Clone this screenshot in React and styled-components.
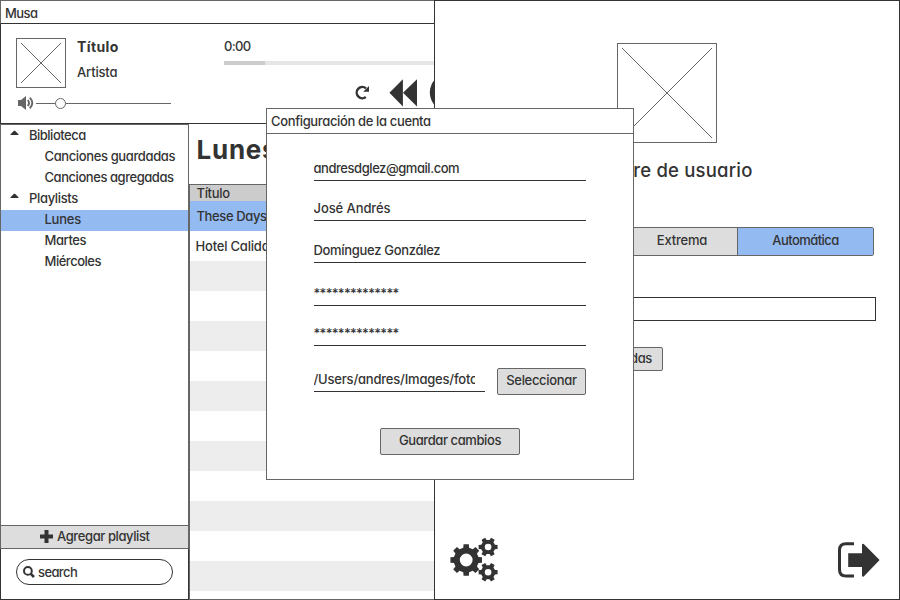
import React from 'react';
import styled, { createGlobalStyle } from 'styled-components';

const INK = '#333';
const LINE = '#666';
const BLUE = '#94baf2';
const GREY = '#ddd';

const GlobalStyle = createGlobalStyle`
  *, *::before, *::after { box-sizing: border-box; }
  body {
    margin: 0;
    background: #fff;
    color: ${INK};
    font: 500 13px Inter, "Liberation Sans", sans-serif;
    font-feature-settings: "cv11";
    overflow: hidden;
  }
  h1, h2, p, ul { margin: 0; padding: 0; list-style: none; }
  svg { display: block; flex: none; overflow: visible; }
`;

const Screen = styled.div`
  position: relative;
  display: flex;
  width: 900px;
  height: 600px;
  overflow: hidden;
`;

const Text = styled.span`
  display: block;
  white-space: pre;
  letter-spacing: ${(p) => p.$track || 0}px;
`;

/* Player window */
const MainWindow = styled.section`
  display: flex;
  flex-direction: column;
  width: 434px;
  height: 600px;
  overflow: hidden;
  border-top: 1px solid ${LINE};
`;

const TitleBar = styled.header`
  height: 23px;
  flex: none;
  padding: 0 0 0 4px;
  line-height: 25px;
  border-left: 1px solid ${LINE};
  border-bottom: 1px solid ${INK};
`;

const Player = styled.div`
  display: flex;
  flex: none;
  height: 100px;
  padding: 14px 0 0 15px;
  border-left: 1px solid ${INK};
  border-bottom: 1px solid ${INK};
`;

const TrackColumn = styled.div`
  width: 208px;
  flex: none;
`;

const TrackRow = styled.div`
  display: flex;
  gap: 11px;
`;

const TrackTitle = styled.h2`
  font-size: 14px;
  font-weight: 700;
  line-height: 18px;
`;

const TrackArtist = styled.div`
  margin-top: 7px;
  line-height: 18px;
`;

const VolumeRow = styled.div`
  display: flex;
  align-items: center;
  height: 16px;
  margin-top: 7px;
  padding-left: 2px;
`;

const PlaybackColumn = styled.div`
  flex: none;
  width: 260px;
`;

const Time = styled.div`
  height: 18px;
  line-height: 16px;
`;

const Progress = styled.div`
  display: flex;
  height: 4px;
  margin-top: 5px;
  background: #e6e6e6;
`;

const ProgressFill = styled.div`
  width: 41px;
  background: #ccc;
`;

const Controls = styled.div`
  display: flex;
  align-items: center;
  height: 40px;
  margin-top: 8px;
  padding-left: 131px;
`;

const Body = styled.div`
  display: flex;
  flex: 1;
  min-height: 0;
`;

const Sidebar = styled.nav`
  display: flex;
  flex-direction: column;
  flex: none;
  width: 189px;
`;

const Tree = styled.ul`
  flex: 1;
  && { padding-top: 1px; }
  border: 1px solid ${LINE};
  border-bottom: 0;
`;

const TreeItem = styled.li`
  display: flex;
  height: 21px;
  line-height: 19px;
  padding-left: ${(p) => (p.$child ? 43.5 : 9)}px;
  background: ${(p) => (p.$selected ? BLUE : 'transparent')};
`;

const Caret = styled.svg`
  margin: 4px 10px 0 0;
`;

const AddButton = styled.button`
  display: flex;
  flex: none;
  gap: 4px;
  height: 24px;
  padding: 0 0 0 39px;
  font: inherit;
  font-feature-settings: inherit;
  color: inherit;
  line-height: 21px;
  background: ${GREY};
  border: 1px solid ${LINE};
  border-radius: 0;
`;

const AddIcon = styled.svg`
  margin-top: 4px;
`;

const SearchArea = styled.div`
  flex: none;
  height: 51px;
  padding: 10px 15px;
  border: 1px solid ${INK};
  border-top: 0;
`;

const SearchBox = styled.label`
  display: flex;
  align-items: center;
  gap: 3px;
  width: 157px;
  height: 26px;
  padding-left: 6px;
  line-height: 24px;
  border: 1px solid ${INK};
  border-radius: 13px;
`;

const Content = styled.div`
  display: flex;
  flex-direction: column;
  flex: 1;
  min-width: 0;
`;

const Heading = styled.h1`
  flex: none;
  height: 60px;
  padding-left: 7.5px;
  font-size: 26px;
  font-weight: 700;
  line-height: 51px;
`;

const Table = styled.div`
  flex: 1;
  border: 1px solid ${LINE};
  border-right: 0;
  overflow: hidden;
`;

const HeaderCell = styled.div`
  height: 16px;
  padding-left: 6.5px;
  line-height: 16px;
  background: #ccc;
`;

const tones = { selected: BLUE, plain: '#fff', stripe: '#ededed' };

const TableRow = styled.div`
  height: 30px;
  padding-left: ${(p) => (p.$tone === 'selected' ? 6.5 : 5.5)}px;
  line-height: 30px;
  background: ${(p) => tones[p.$tone]};
`;

/* Settings panel */
const Settings = styled.section`
  display: flex;
  flex-direction: column;
  width: 466px;
  height: 600px;
  border: 1px solid ${INK};
  padding: 42px 19px 17px 15px;
`;

const Avatar = styled.div`
  align-self: center;
  margin-left: 4px;
`;

const UserName = styled.div`
  align-self: center;
  margin: 16px 0 0 2px;
  font-size: 18.5px;
  line-height: 22px;
`;

const Segments = styled.div`
  display: flex;
  align-self: flex-end;
  flex: none;
  height: 29px;
  margin: 46px 6px 0 0;
  border: 1px solid ${LINE};
  border-radius: 2px;
`;

const Segment = styled.div`
  display: flex;
  justify-content: center;
  width: ${(p) => p.$width}px;
  line-height: 25px;
  background: ${(p) => (p.$active ? BLUE : GREY)};
  & + & { border-left: 1px solid ${LINE}; }
`;

const TextInput = styled.div`
  flex: none;
  height: 24px;
  margin: 41px 4px 0 8px;
  border: 1px solid ${INK};
`;

const SmallButton = styled.div`
  display: flex;
  flex: none;
  justify-content: flex-end;
  width: 151px;
  height: 24px;
  margin: 26px 0 0 62px;
  padding-right: 10px;
  line-height: 21px;
  background: ${GREY};
  border: 1px solid ${LINE};
  border-radius: 2px;
`;

const PanelFooter = styled.footer`
  display: flex;
  justify-content: space-between;
  align-items: flex-end;
  margin-top: auto;
`;

/* Account dialog */
const Dialog = styled.section`
  position: absolute;
  left: 266px;
  top: 108px;
  width: 368px;
  height: 372px;
  background: #fff;
  border: 1px solid ${LINE};
`;

const DialogTitle = styled.header`
  height: 25px;
  padding-left: 4px;
  line-height: 25px;
  border-bottom: 1px solid ${LINE};
`;

const Form = styled.div`
  display: flex;
  flex-direction: column;
  width: 272px;
  margin: 23px 0 0 47px;
`;

const Field = styled.div`
  width: ${(p) => p.$width || 272}px;
  height: 24px;
  margin-top: ${(p) => p.$gap || 0}px;
  padding-right: 10px;
  line-height: 23px;
  border-bottom: 1px solid ${INK};
  & > * {
    overflow: hidden;
    height: 23px;
    text-indent: -0.5px;
  }
`;

const FileRow = styled.div`
  display: flex;
  justify-content: space-between;
  align-items: flex-start;
  margin-top: 22px;
`;

const Button = styled.button`
  display: flex;
  justify-content: center;
  align-items: flex-start;
  align-self: ${(p) => (p.$center ? 'center' : 'auto')};
  width: ${(p) => p.$width}px;
  height: 27px;
  margin-top: ${(p) => p.$gap || 0}px;
  padding: 0;
  font: inherit;
  font-feature-settings: inherit;
  color: inherit;
  line-height: 23px;
  background: ${GREY};
  border: 1px solid ${LINE};
  border-radius: 2px;
`;

const Placeholder = ({ size }) => (
  <svg width={size} height={size} fill="none" stroke={LINE}>
    <rect x="0.5" y="0.5" width={size - 1} height={size - 1} />
    <path d={`M5 5L${size - 5} ${size - 5}M${size - 5} 5L5 ${size - 5}`} />
  </svg>
);

const gearPath = (cx, cy, outer, body, hole, teeth) => {
  const points = [];
  const step = (Math.PI * 2) / teeth;
  for (let i = 0; i < teeth; i += 1) {
    [[-0.3, body], [-0.21, outer], [0.21, outer], [0.3, body]].forEach(([t, r]) => {
      const a = (i + t) * step;
      points.push(`${(cx + r * Math.cos(a)).toFixed(2)} ${(cy + r * Math.sin(a)).toFixed(2)}`);
    });
  }
  return `M${points.join('L')}ZM${cx - hole} ${cy}a${hole} ${hole} 0 1 0 ${hole * 2} 0a${hole} ${hole} 0 1 0 ${-hole * 2} 0Z`;
};

const GearsIcon = () => (
  <svg width="48" height="44" fill={INK} fillRule="evenodd">
    <path d={gearPath(16.2, 22, 16, 12.6, 6.4, 8)} />
    <path d={gearPath(38.1, 9, 9.7, 7.2, 3.3, 6)} />
    <path d={gearPath(38.1, 34.2, 9.7, 7.2, 3.3, 6)} />
  </svg>
);

const SignOutIcon = () => (
  <svg width="43" height="41" fill={INK}>
    <path d="M17 2.8H9Q2.5 2.8 2.5 9.3V28.5Q2.5 35.1 9 35.1H17" fill="none" stroke={INK} strokeWidth="3" />
    <path d="M11.2 12.3H25V3.3L26.5 2.8L42.6 19.1L26.5 35.7L25 35.2V25.9H11.2Z" />
  </svg>
);

const SpeakerIcon = () => (
  <svg width="18" height="16" fill={LINE}>
    <path d="M0 5H3L8 1V15L3 11H0Z" />
    <path d="M9.8 5Q12.2 8 9.8 11M11.8 2.7Q16.8 8 11.8 13.3" fill="none" stroke={LINE} strokeWidth="1.9" />
  </svg>
);

const VolumeSlider = () => (
  <svg width="135" height="16" stroke={LINE} fill="#fff">
    <path d="M0 8.5H135" />
    <circle cx="24.5" cy="8.5" r="5" />
  </svg>
);

const RepeatIcon = () => (
  <svg width="34" height="40" fill={INK}>
    <path d="M11 15.4A5.6 5.6 0 1 0 10.8 24" fill="none" stroke={INK} strokeWidth="2.4" />
    <path d="M14 13V18.8H8.2Z" />
  </svg>
);

const RewindIcon = () => (
  <svg width="40" height="40" fill={INK}>
    <path d="M0.4 19.7L13.9 6.2V33.4ZM14 19.7L28 6.2V33.4Z" />
  </svg>
);

const PlayIcon = () => (
  <svg width="38" height="40" fill={INK}>
    <path fillRule="evenodd" d="M0.8 19.5a19 19 0 1 0 38 0a19 19 0 1 0-38 0ZM14 10L30 19.5L14 29Z" />
  </svg>
);

const Branch = ({ label, track }) => (
  <TreeItem>
    <Caret width="9" height="6"><path d="M0.5 5V4.3L4 0.8H5L8.5 4.3V5Z" fill={INK} /></Caret>
    <Text $track={track}>{label}</Text>
  </TreeItem>
);

const Leaf = ({ label, track, selected }) => (
  <TreeItem $child $selected={selected}>
    <Text $track={track}>{label}</Text>
  </TreeItem>
);

export default function App() {
  return (
    <Screen>
      <GlobalStyle />
      <MainWindow>
        <TitleBar><Text $track={-0.6}>Musa</Text></TitleBar>
        <Player>
          <TrackColumn>
            <TrackRow>
              <Placeholder size={50} />
              <div>
                <TrackTitle><Text $track={0.4}>Título</Text></TrackTitle>
                <TrackArtist><Text $track={-0.17}>Artista</Text></TrackArtist>
              </div>
            </TrackRow>
            <VolumeRow><SpeakerIcon /><VolumeSlider /></VolumeRow>
          </TrackColumn>
          <PlaybackColumn>
            <Time><Text $track={-0.7}>0:00</Text></Time>
            <Progress><ProgressFill /></Progress>
            <Controls><RepeatIcon /><RewindIcon /><PlayIcon /></Controls>
          </PlaybackColumn>
        </Player>
        <Body>
          <Sidebar>
            <Tree>
              <Branch label="Biblioteca" track={-0.5} />
              <Leaf label="Canciones guardadas" track={-0.38} />
              <Leaf label="Canciones agregadas" track={-0.45} />
              <Branch label="Playlists" track={-0.34} />
              <Leaf label="Lunes" track={-0.25} selected />
              <Leaf label="Martes" track={-0.42} />
              <Leaf label="Miércoles" track={-0.48} />
            </Tree>
            <AddButton>
              <AddIcon width="13" height="13"><path d="M6.5 0V13M0 6.5H13" stroke={INK} strokeWidth="4" /></AddIcon>
              <Text $track={-0.4}>Agregar playlist</Text>
            </AddButton>
            <SearchArea>
              <SearchBox>
                <svg width="12" height="12" fill="none" stroke={INK} strokeWidth="2">
                  <circle cx="4.9" cy="4.9" r="3.9" />
                  <path d="M7.8 7.8L11 11" strokeWidth="2.6" />
                </svg>
                <Text $track={-0.6}>search</Text>
              </SearchBox>
            </SearchArea>
          </Sidebar>
          <Content>
            <Heading><Text $track={0.75}>Lunes</Text></Heading>
            <Table>
              <HeaderCell><Text $track={-0.33}>Título</Text></HeaderCell>
              <TableRow $tone="selected"><Text $track={-0.38}>These Days</Text></TableRow>
              <TableRow $tone="plain"><Text $track={-0.2}>Hotel Calida</Text></TableRow>
              {Array.from({ length: 12 }, (_, i) => (
                <TableRow key={i} $tone={i % 2 ? 'plain' : 'stripe'} />
              ))}
            </Table>
          </Content>
        </Body>
      </MainWindow>

      <Settings>
        <Avatar><Placeholder size={100} /></Avatar>
        <UserName><Text $track={0.2}>Nombre de usuario</Text></UserName>
        <Segments>
          <Segment $width={110}><Text $track={-0.2}>Extrema</Text></Segment>
          <Segment $width={136} $active><Text $track={-0.55}>Automática</Text></Segment>
        </Segments>
        <TextInput />
        <SmallButton><Text $track={-0.35}>Canciones guardadas</Text></SmallButton>
        <PanelFooter><GearsIcon /><SignOutIcon /></PanelFooter>
      </Settings>

      <Dialog>
        <DialogTitle><Text $track={-0.36}>Configuración de la cuenta</Text></DialogTitle>
        <Form>
          <Field><Text $track={-0.45}>andresdglez@gmail.com</Text></Field>
          <Field $gap={16}><Text $track={-0.08}>José Andrés</Text></Field>
          <Field $gap={18}><Text $track={-0.31}>Domínguez González</Text></Field>
          <Field $gap={19}><Text $track={-0.69}>**************</Text></Field>
          <Field $gap={16}><Text $track={-0.69}>**************</Text></Field>
          <FileRow>
            <Field $width={171}><Text $track={-0.2}>/Users/andres/Images/foto</Text></Field>
            <Button $width={89}><Text $track={-0.32}>Seleccionar</Text></Button>
          </FileRow>
          <Button $width={140} $gap={33} $center><Text $track={-0.41}>Guardar cambios</Text></Button>
        </Form>
      </Dialog>
    </Screen>
  );
}
